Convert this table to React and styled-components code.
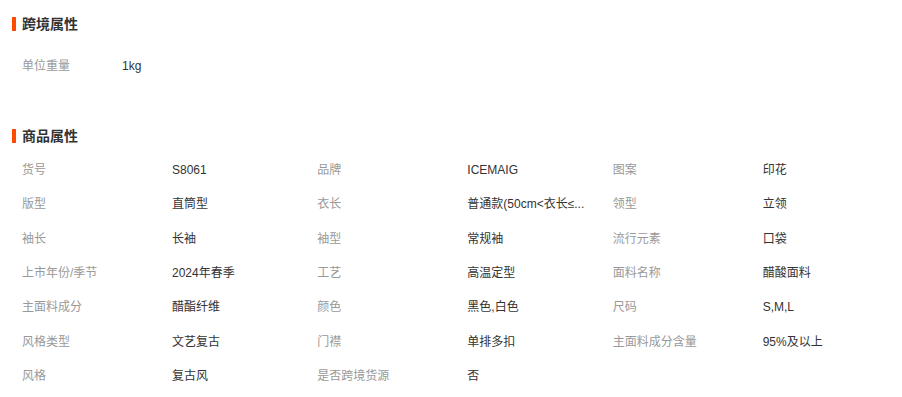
import React from "react";
import styled, { createGlobalStyle } from "styled-components";

const Global = createGlobalStyle`
  html, body { margin: 0; padding: 0; background: #fff; }
  body {
    font-family: "Liberation Sans", Arial, "Noto Sans CJK SC", sans-serif;
    -webkit-font-smoothing: antialiased;
  }
`;

const Page = styled.div`
  width: 902px;
  height: 397px;
  overflow: hidden;
  background: #fff;
`;

const Section = styled.section`
  display: flex;
  flex-direction: column;
  margin-top: ${(p) => p.$top}px;
`;

const Title = styled.h3`
  margin: 0 0 ${(p) => p.$gap}px 12px;
  display: flex;
  align-items: center;
  gap: 6px;
  height: 20px;
  font-size: 14px;
  line-height: 20px;
  font-weight: bold;
  color: #333;
  &::before {
    content: "";
    display: block;
    width: 4px;
    height: 14px;
    background: #ff4a00;
  }
`;

const SimpleRow = styled.div`
  display: flex;
  margin-left: 22px;
  height: 34px;
  align-items: center;
  font-size: 12px;
`;

const Label = styled.div`
  color: #999;
  font-size: 12px;
  width: ${(p) => (p.$w ? `${p.$w}px` : "auto")};
  padding-left: ${(p) => p.$pad || 0}px;
  line-height: 34.33px;
  white-space: nowrap;
`;

const Value = styled.div`
  color: #333;
  font-size: 12px;
  padding-left: ${(p) => p.$pad || 0}px;
  line-height: 34.33px;
  white-space: nowrap;
  min-width: 0;
`;

const Grid = styled.div`
  display: grid;
  margin-left: 12px;
  width: 886px;
  grid-template-columns: 150px 1fr 150px 1fr 150px 1fr;
  grid-auto-rows: 34.33px;
`;

const attrs = [
  ["货号", "S8061"],
  ["品牌", "ICEMAIG"],
  ["图案", "印花"],
  ["版型", "直筒型"],
  ["衣长", "普通款(50cm<衣长≤..."],
  ["领型", "立领"],
  ["袖长", "长袖"],
  ["袖型", "常规袖"],
  ["流行元素", "口袋"],
  ["上市年份/季节", "2024年春季"],
  ["工艺", "高温定型"],
  ["面料名称", "醋酸面料"],
  ["主面料成分", "醋酯纤维"],
  ["颜色", "黑色,白色"],
  ["尺码", "S,M,L"],
  ["风格类型", "文艺复古"],
  ["门襟", "单排多扣"],
  ["主面料成分含量", "95%及以上"],
  ["风格", "复古风"],
  ["是否跨境货源", "否"],
];

export default function App() {
  return (
    <Page>
      <Global />
      <Section $top={14}>
        <Title $gap={15}>跨境属性</Title>
        <SimpleRow>
          <Label $w={100}>单位重量</Label>
          <Value>1kg</Value>
        </SimpleRow>
      </Section>
      <Section $top={43}>
        <Title $gap={7}>商品属性</Title>
        <Grid>
          {attrs.map(([k, v]) => (
            <React.Fragment key={k}>
              <Label $pad={10}>{k}</Label>
              <Value $pad={10}>{v}</Value>
            </React.Fragment>
          ))}
        </Grid>
      </Section>
    </Page>
  );
}
